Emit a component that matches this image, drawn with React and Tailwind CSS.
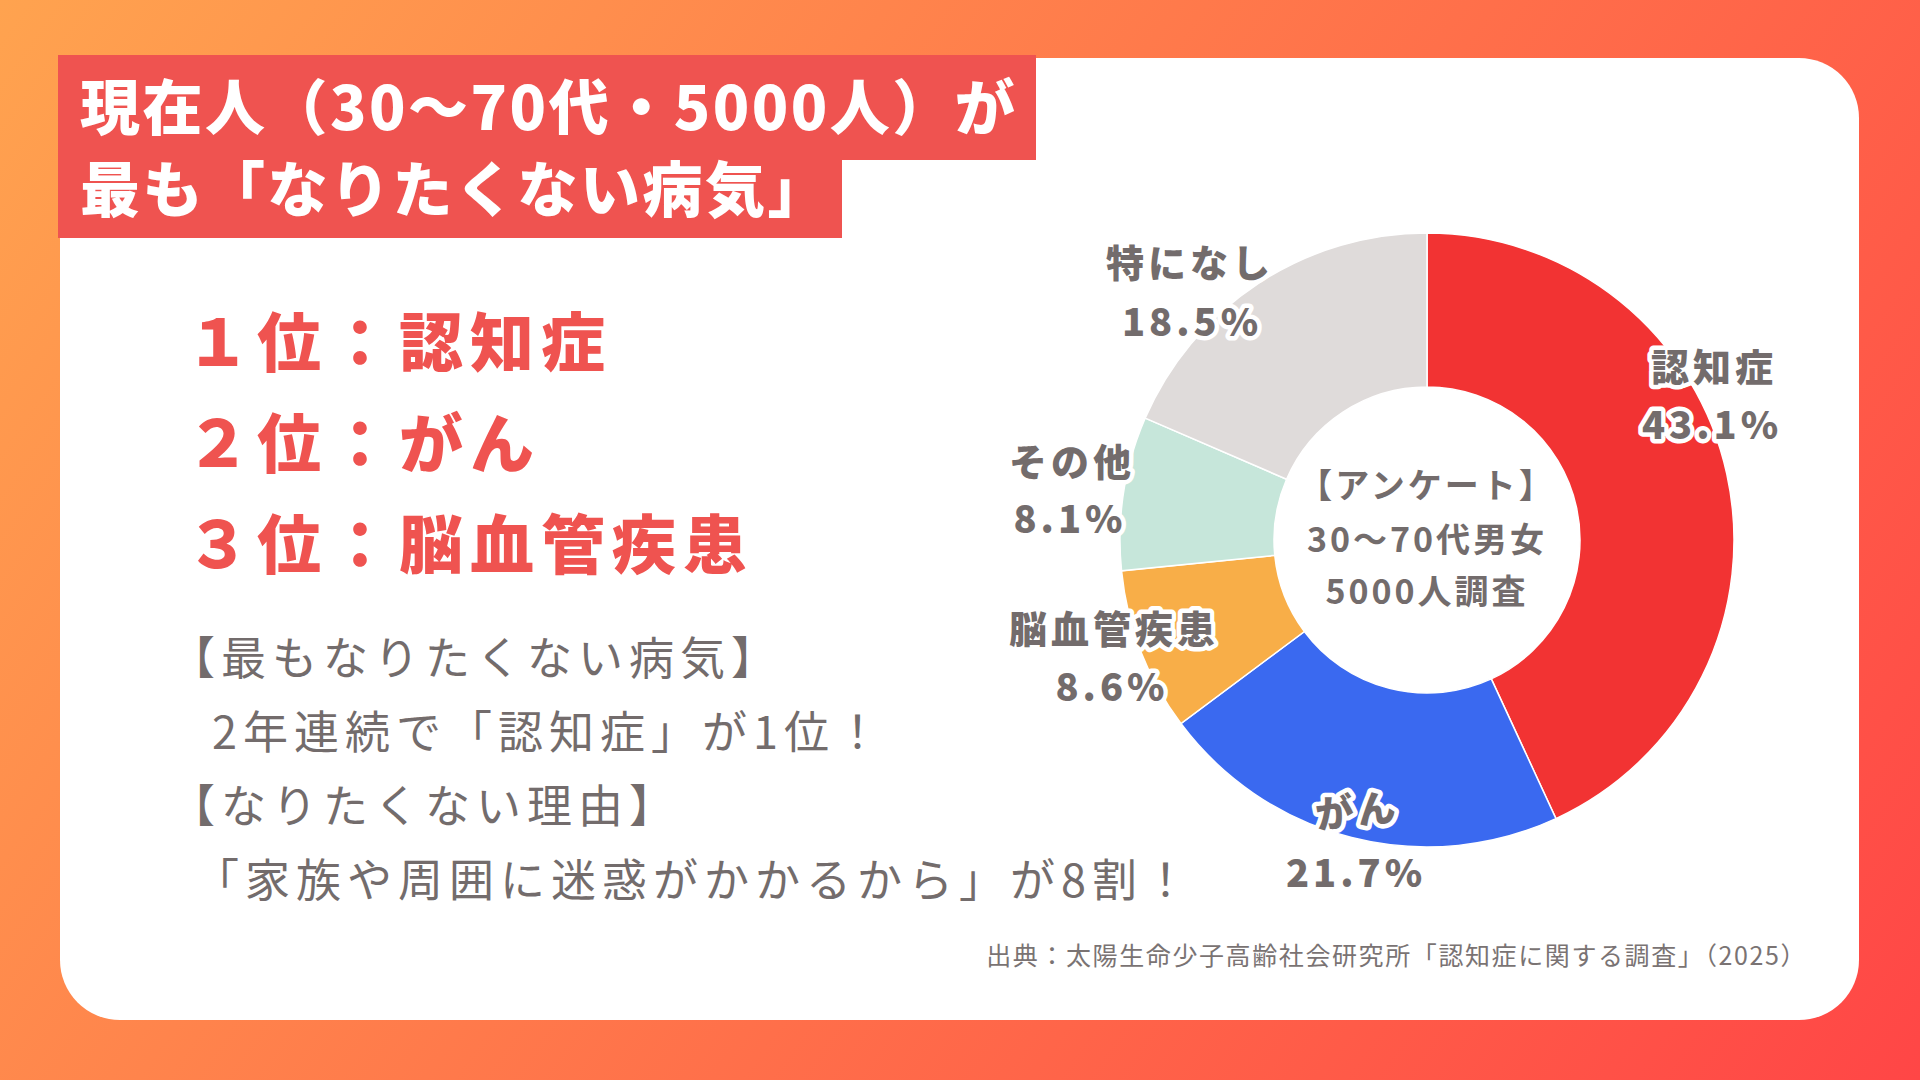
const slices = [
  { v: 43.1, c: '#F23333' },
  { v: 21.7, c: '#3A69F0' },
  { v: 8.6, c: '#F8AE48' },
  { v: 8.1, c: '#C6E6DA' },
  { v: 18.5, c: '#DFDBDA' },
]

// chart labels, in svg coords (svg sits at x 1000, y 238 of the page)
const labels = [
  { t: '認知症', x: 714, y: 126 },
  { t: '43.1%', x: 712, y: 184 },
  { t: '特になし', x: 190, y: 22 },
  { t: '18.5%', x: 192, y: 81 },
  { t: 'その他', x: 72, y: 221 },
  { t: '8.1%', x: 70, y: 278 },
  { t: '脳血管疾患', x: 114, y: 388 },
  { t: '8.6%', x: 112, y: 446 },
  { t: '21.7%', x: 356, y: 632 },
]

const CX = 427
const CY = 302
const R = 307
const r = 153

function pt(rad, deg) {
  const a = (deg * Math.PI) / 180
  return [CX + rad * Math.sin(a), CY - rad * Math.cos(a)]
}

function slicePath(a0, a1) {
  const large = a1 - a0 > 180 ? 1 : 0
  const [x0, y0] = pt(R, a0)
  const [x1, y1] = pt(R, a1)
  const [x2, y2] = pt(r, a1)
  const [x3, y3] = pt(r, a0)
  return `M${x0} ${y0} A${R} ${R} 0 ${large} 1 ${x1} ${y1} L${x2} ${y2} A${r} ${r} 0 ${large} 0 ${x3} ${y3} Z`
}

function Donut() {
  let acc = 0
  const paths = slices.map((s, i) => {
    const a0 = (acc / 100) * 360
    acc += s.v
    const a1 = (acc / 100) * 360
    return <path key={i} d={slicePath(a0, a1)} fill={s.c} stroke="#ffffff" strokeWidth="1.5" />
  })

  const labelStyle = {
    fontSize: 38,
    fontWeight: 900,
    letterSpacing: 4,
    fill: '#736C6C',
    stroke: '#ffffff',
    strokeWidth: 9,
    strokeLinejoin: 'round',
    paintOrder: 'stroke',
  }

  return (
    <svg width="820" height="680" viewBox="0 0 820 680" className="overflow-visible">
      {paths}
      {labels.map((l) => (
        <text key={l.t} x={l.x} y={l.y} textAnchor="middle" dominantBaseline="central" style={labelStyle}>
          {l.t}
        </text>
      ))}
      <text
        x={357}
        y={570}
        textAnchor="middle"
        dominantBaseline="central"
        transform="rotate(-6 357 570)"
        style={labelStyle}
      >
        がん
      </text>
      <g textAnchor="middle" dominantBaseline="central" fill="#736C6C" style={{ fontSize: 34, fontWeight: 700, letterSpacing: 3 }}>
        <text x={CX} y={245}>【アンケート】</text>
        <text x={CX} y={299}>30〜70代男女</text>
        <text x={CX} y={351}>5000人調査</text>
      </g>
    </svg>
  )
}

export default function App() {
  return (
    <div className="h-[1080px] w-[1920px] overflow-hidden bg-[linear-gradient(125deg,#FFA34F,#FF4646)] pl-[60px] pt-[58px] font-['Noto_Sans_CJK_JP',sans-serif]">
      <div className="flex h-[962px] w-[1799px] flex-col rounded-[60px] bg-white">
        <div className="flex">
          <div className="w-[940px] shrink-0">
            <div className="-ml-[2px] -mt-[3px] text-[60px] font-black tracking-[2.5px] text-white">
              <div className="w-[978px] whitespace-nowrap bg-[#EF5350] pb-[18px] pl-[22px] pt-[10px] leading-[77px]">
                現在人（30〜70代・5000人）が
              </div>
              <div className="w-[784px] whitespace-nowrap bg-[#EF5350] pb-[26px] pl-[22px] leading-[52px]">
                最も「なりたくない病気」
              </div>
            </div>

            <div className="mt-[50px] pl-[126px] text-[64px] font-black leading-[101px] tracking-[7px] text-[#EF5350]">
              <div>１位：認知症</div>
              <div>２位：がん</div>
              <div>３位：脳血管疾患</div>
            </div>

            <div className="mt-[28px] whitespace-nowrap text-[45px] leading-[74px] tracking-[6px] text-[#736C6C]">
              <div className="pl-[110px]">【最もなりたくない病気】</div>
              <div className="pl-[152px]">2年連続で「認知症」が1位！</div>
              <div className="pl-[110px]">【なりたくない理由】</div>
              <div className="pl-[134px]">「家族や周囲に迷惑がかかるから」が8割！</div>
            </div>
          </div>

          <div className="mt-[180px]">
            <Donut />
          </div>
        </div>

        <div className="mt-auto flex justify-end pb-[51px] pr-[52px]">
          <p className="text-[25px] leading-[30px] tracking-[1.6px] text-[#7A7373]">
            出典：太陽生命少子高齢社会研究所「認知症に関する調査」（2025）
          </p>
        </div>
      </div>
    </div>
  )
}
